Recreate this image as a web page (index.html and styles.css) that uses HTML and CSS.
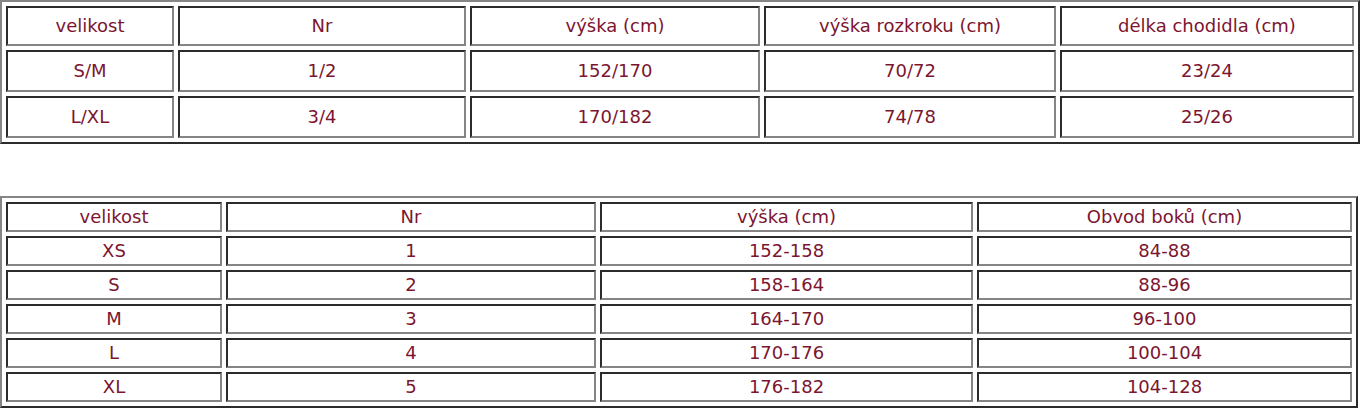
FILE: index.html
```html
<!DOCTYPE html>
<html>
<head>
<meta charset="utf-8">
<link rel="stylesheet" href="styles.css">
</head>
<body>
<table class="sizes sizes-a">
  <colgroup>
    <col class="a1"><col class="a2"><col class="a3"><col class="a4"><col class="a5">
  </colgroup>
  <tr class="row-head"><td>velikost</td><td>Nr</td><td>výška (cm)</td><td>výška rozkroku (cm)</td><td>délka chodidla (cm)</td></tr>
  <tr class="row-body"><td>S/M</td><td>1/2</td><td>152/170</td><td>70/72</td><td>23/24</td></tr>
  <tr class="row-body"><td>L/XL</td><td>3/4</td><td>170/182</td><td>74/78</td><td>25/26</td></tr>
</table>

<table class="sizes sizes-b">
  <colgroup>
    <col class="b1"><col class="b2"><col class="b3"><col class="b4">
  </colgroup>
  <tr><td>velikost</td><td>Nr</td><td>výška (cm)</td><td>Obvod boků (cm)</td></tr>
  <tr><td>XS</td><td>1</td><td>152-158</td><td>84-88</td></tr>
  <tr><td>S</td><td>2</td><td>158-164</td><td>88-96</td></tr>
  <tr><td>M</td><td>3</td><td>164-170</td><td>96-100</td></tr>
  <tr><td>L</td><td>4</td><td>170-176</td><td>100-104</td></tr>
  <tr><td>XL</td><td>5</td><td>176-182</td><td>104-128</td></tr>
</table>
</body>
</html>
```

FILE: styles.css
```css
html, body {
  margin: 0;
  padding: 0;
  background: #ffffff;
}

.sizes {
  table-layout: fixed;
  border-collapse: separate;
  border-spacing: 4px;
  border-style: solid;
  border-width: 2px;
  border-color: #858585 #2b2b2b #2b2b2b #858585;
  font-family: "DejaVu Sans", sans-serif;
  font-size: 18px;
  color: #7c1530;
}

.sizes td {
  box-sizing: border-box;
  padding: 0;
  text-align: center;
  vertical-align: middle;
  border-style: solid;
  border-width: 2px;
  border-color: #2b2b2b #858585 #858585 #2b2b2b;
  line-height: 22px;
}

.sizes-a { width: 1360px; }
.sizes-a .row-head { height: 40px; }
.sizes-a .row-body { height: 42px; }
.a1 { width: 168px; }
.a2 { width: 288px; }
.a3 { width: 290px; }
.a4 { width: 292px; }
.a5 { width: 294px; }

.sizes-b { width: 1358px; margin-top: 52px; }
.sizes-b tr { height: 30px; }
.b1 { width: 216px; }
.b2 { width: 370px; }
.b3 { width: 373px; }
.b4 { width: 375px; }
```
